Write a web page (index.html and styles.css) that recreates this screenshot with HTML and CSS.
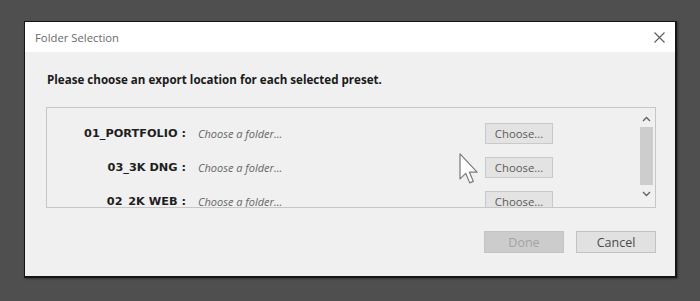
FILE: index.html
```html
<!DOCTYPE html>
<html>
<head>
<meta charset="utf-8">
<link rel="stylesheet" href="styles.css">
</head>
<body>
<div class="dialog">
  <div class="titlebar">
    <span class="title">Folder Selection</span>
    <svg class="close" width="11" height="11" viewBox="0 0 11 11"><path d="M0.5 0.5 L10.5 10.5 M10.5 0.5 L0.5 10.5" stroke="#5a5a5a" stroke-width="1.1" fill="none"/></svg>
  </div>
  <div class="content">
    <p class="intro">Please choose an export location for each selected preset.</p>
    <div class="panel">
      <div class="rows">
        <div class="row">
          <span class="label">01_PORTFOLIO :</span>
          <span class="path">Choose a folder...</span>
          <button class="btn choose">Choose...</button>
        </div>
        <div class="row">
          <span class="label">03_3K DNG :</span>
          <span class="path">Choose a folder...</span>
          <button class="btn choose">Choose...</button>
        </div>
        <div class="row">
          <span class="label">02_2K WEB :</span>
          <span class="path">Choose a folder...</span>
          <button class="btn choose">Choose...</button>
        </div>
      </div>
      <div class="scrollbar">
        <svg class="arrow" width="9" height="6" viewBox="0 0 9 6"><path d="M1 5 L4.5 1.5 L8 5" stroke="#606060" stroke-width="1.3" fill="none"/></svg>
        <div class="track"><div class="thumb"></div></div>
        <svg class="arrow" width="9" height="6" viewBox="0 0 9 6"><path d="M1 1 L4.5 4.5 L8 1" stroke="#606060" stroke-width="1.3" fill="none"/></svg>
      </div>
    </div>
    <div class="footer">
      <button class="btn big done" disabled>Done</button>
      <button class="btn big cancel">Cancel</button>
    </div>
  </div>
</div>
<svg class="cursor" width="20" height="32" viewBox="0 0 13 21"><path d="M0.6 0.6 L0.6 17 L4.4 13.4 L7 19.6 L9.3 18.6 L6.8 12.6 L11.8 12.6 Z" fill="#ffffff" stroke="#7a7a7a" stroke-width="0.8" stroke-linejoin="round"/></svg>
</body>
</html>
```

FILE: styles.css
```css
html, body {
  margin: 0;
  padding: 0;
}
body {
  background: #4f4f4f;
  width: 700px;
  height: 301px;
  overflow: hidden;
  position: relative;
  font-family: "Open Sans", "Noto Sans", sans-serif;
  padding-top: 21px;
  box-sizing: border-box;
}
.dialog {
  margin-left: 24px;
  width: 653px;
  box-sizing: border-box;
  border: 1px solid #151515;
  border-right-width: 2px;
  border-bottom-width: 2px;
  background: #f0f0f0;
  box-shadow: 1px 1px 2px rgba(0,0,0,0.35);
}
.titlebar {
  height: 30px;
  background: #ffffff;
  display: flex;
  align-items: center;
  justify-content: space-between;
  padding: 0 10px 0 10px;
}
.title {
  font-size: 11.3px;
  color: #6a6a6a;
}
.close {
  display: block;
}
.content {
  padding: 20px 19px 23px 21px;
}
.intro {
  margin: 0 0 19px 1px;
  font-size: 11.6px;
  line-height: 16px;
  font-weight: 700;
  color: #1a1a1a;
}
.panel {
  height: 101px;
  box-sizing: border-box;
  border: 1px solid #c6c6c6;
  display: flex;
  overflow: hidden;
}
.rows {
  flex: 1;
  padding-top: 8px;
}
.row {
  display: grid;
  grid-template-columns: 139px 275px 68px;
  column-gap: 12px;
  align-items: center;
  height: 34px;
}
.label {
  text-align: right;
  font-family: "DejaVu Sans", "Open Sans", sans-serif;
  font-size: 11.3px;
  font-weight: 700;
  color: #1e1e1e;
  white-space: nowrap;
}
.path {
  font-size: 11px;
  font-style: italic;
  color: #666666;
}
.btn {
  font-family: "Open Sans", "Noto Sans", sans-serif;
  padding: 0;
  margin: 0;
  box-sizing: border-box;
  border: 1px solid #c9c9c9;
  background: #e3e3e3;
  color: #5a5a5a;
}
.choose {
  height: 21px;
  font-size: 11.3px;
}
.scrollbar {
  width: 17px;
  display: flex;
  flex-direction: column;
  align-items: center;
  padding-top: 8px;
  box-sizing: border-box;
}
.arrow {
  display: block;
}
.track {
  flex: none;
  height: 69px;
  width: 100%;
  display: flex;
  justify-content: center;
  padding-top: 5px;
  box-sizing: border-box;
}
.thumb {
  width: 13px;
  height: 58px;
  background: #cdcdcd;
}
.footer {
  display: flex;
  justify-content: flex-end;
  gap: 12px;
  margin-top: 23px;
}
.big {
  height: 22px;
  width: 80px;
  font-size: 12.5px;
}
.done {
  background: #cccccc;
  border-color: #c4c4c4;
  color: #a3a3a3;
}
.cancel {
  background: #e1e1e1;
  border-color: #c2c2c2;
  color: #4a4a4a;
}
.cursor {
  position: absolute;
  left: 459px;
  top: 153px;
}
```
